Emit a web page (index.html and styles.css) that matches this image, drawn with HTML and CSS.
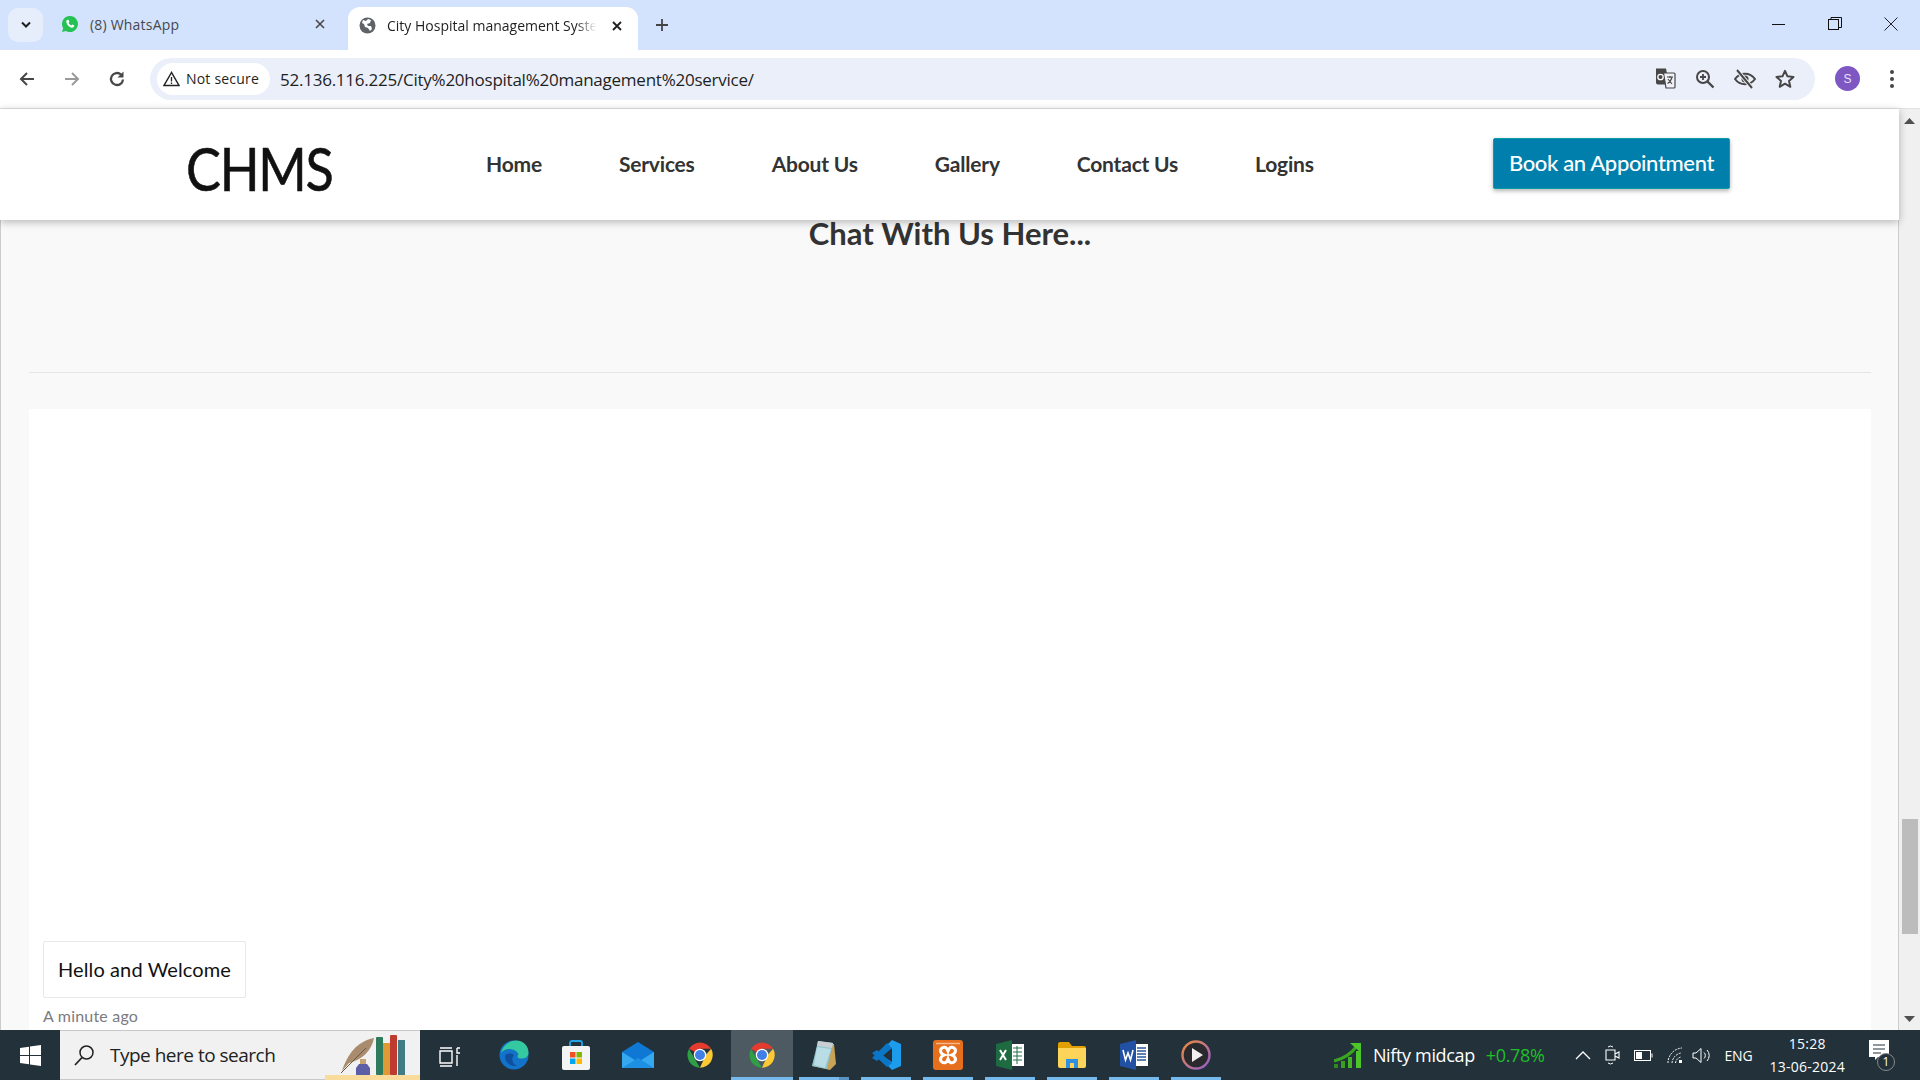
FILE: index.html
```html
<!DOCTYPE html>
<html lang="en">
<head>
<meta charset="utf-8">
<title>City Hospital management System</title>
<link rel="stylesheet" href="styles.css">
</head>
<body>
<svg class="defs" width="0" height="0">
  <symbol id="chrome" viewBox="0 0 48 48">
    <path d="M24 24L6.500 14A20.500 20.500 0 0 1 41.800 14H24z" fill="#e33b2e"/>
    <path d="M41.800 14A20.500 20.500 0 0 1 24 44.500L33 24z" fill="#fcc934"/>
    <path d="M24 44.500A20.500 20.500 0 0 1 6.500 14L15 29z" fill="#2f9e44"/>
    <circle cx="24" cy="24" r="10" fill="#fff"/>
    <circle cx="24" cy="24" r="8" fill="#3f7fe6"/>
  </symbol>
</svg>

<div class="tabstrip">
  <div class="tab-search"><svg width="12" height="8" viewBox="0 0 12 8"><path d="M2 1.500l4 4 4-4" fill="none" stroke="#1f1f1f" stroke-width="2"/></svg></div>
  <div class="tab tab-idle">
    <svg class="favicon" width="18" height="18" viewBox="0 0 18 18"><path d="M9 1a8 8 0 0 0-6.800 12.200L1 17l3.900-1.100A8 8 0 1 0 9 1z" fill="#25c153"/><path d="M6.400 4.800c-.9.500-1.400 1.800-.8 3.300 .7 1.900 2.400 3.700 4.300 4.400 1.500.5 2.700 0 3.200-.9l.2-1.100-2-1-.9 1c-1.200-.4-2.200-1.400-2.800-2.700l.8-.9-.9-2.100z" fill="#fff"/></svg>
    <span class="tab-title">(8) WhatsApp</span>
    <svg class="tab-close" width="10" height="10" viewBox="0 0 10 10"><path d="M1 1l8 8M9 1l-8 8" stroke="#474747" stroke-width="1.600"/></svg>
  </div>
  <div class="tab tab-active">
    <svg class="favicon" width="17" height="17" viewBox="0 0 17 17"><circle cx="8.500" cy="8.500" r="8" fill="#5f6368"/><path d="M4 3l3 1 2-2 3 1-1 3-3 1 1 2 3 0 1 3-2 2-2-3-3-1-1-3-2-1z" fill="#fff"/></svg>
    <span class="tab-title tab-title-fade">City Hospital management System</span>
    <svg class="tab-close" width="10" height="10" viewBox="0 0 10 10"><path d="M1 1l8 8M9 1l-8 8" stroke="#1f1f1f" stroke-width="1.800"/></svg>
  </div>
  <svg class="new-tab" width="14" height="14" viewBox="0 0 14 14"><path d="M7 1v12M1 7h12" stroke="#444" stroke-width="1.800"/></svg>
  <div class="window-controls">
    <svg width="14" height="14" viewBox="0 0 14 14"><path d="M0 7.500h13" stroke="#111" stroke-width="1"/></svg>
    <svg width="14" height="14" viewBox="0 0 14 14"><rect x=".5" y="2.500" width="10" height="10" fill="none" stroke="#111"/><path d="M3 2.500V.5h10.500v10h-3" fill="none" stroke="#111"/></svg>
    <svg width="14" height="14" viewBox="0 0 14 14"><path d="M.5.5l13 13M13.500.5l-13 13" stroke="#222" stroke-width="1"/></svg>
  </div>
</div>

<div class="toolbar">
  <svg class="nav-btn" width="18" height="18" viewBox="0 0 18 18"><path d="M16 9H3M9 3L3 9l6 6" fill="none" stroke="#474747" stroke-width="2"/></svg>
  <svg class="nav-btn" width="18" height="18" viewBox="0 0 18 18"><path d="M2 9h13M9 3l6 6-6 6" fill="none" stroke="#9a9a9a" stroke-width="2"/></svg>
  <svg class="nav-btn" width="18" height="18" viewBox="0 0 18 18"><path d="M15 9.500A6 6 0 1 1 13 4.500" fill="none" stroke="#474747" stroke-width="2.300"/><path d="M15.500 1.500v6h-6z" fill="#474747"/></svg>
  <div class="omnibox">
    <div class="chip">
      <svg width="17" height="16" viewBox="0 0 17 16"><path d="M8.500 1.500L1 14.500h15z" fill="none" stroke="#222" stroke-width="1.500"/><path d="M8.500 6v4.500M8.500 11.500v1.500" stroke="#222" stroke-width="1.300"/></svg>
      <span>Not secure</span>
    </div>
    <span class="url">52.136.116.225/City%20hospital%20management%20service/</span>
    <div class="omni-icons">
      <svg width="21" height="21" viewBox="0 0 21 21"><path d="M1 .5h10l3 16H3a2 2 0 0 1-2-2z" fill="#474747"/><path d="M8.500 5h10.500a1 1 0 0 1 1 1v13a1 1 0 0 1-1 1H11z" fill="#f0f1f8" stroke="#474747" stroke-width="1.200"/><circle cx="5.500" cy="9" r="2.700" fill="none" stroke="#fff" stroke-width="1.300"/><path d="M12 9h6M15 8v2M17 9.500c-1 3-2.500 5-4.500 6M13 11l4 5" stroke="#474747" stroke-width="1.100" fill="none"/></svg>
      <svg width="20" height="20" viewBox="0 0 20 20"><circle cx="8" cy="8" r="6" fill="none" stroke="#474747" stroke-width="2"/><path d="M12.500 12.500L18.500 18.500" stroke="#474747" stroke-width="2.400"/><path d="M5 8h6M8 5v6" stroke="#474747" stroke-width="1.800"/></svg>
      <svg width="22" height="20" viewBox="0 0 22 20"><path d="M1 10c5-7 15-7 20 0-5 7-15 7-20 0z" fill="none" stroke="#474747" stroke-width="2"/><circle cx="11" cy="10" r="3.500" fill="#474747"/><path d="M3 1l15 18" stroke="#f0f1f8" stroke-width="4"/><path d="M3 1l15 18" stroke="#474747" stroke-width="2"/></svg>
      <svg width="20" height="19" viewBox="0 0 20 19"><path d="M10 1.800l2.500 5.500 6 .6-4.500 4 1.300 5.900L10 14.700l-5.300 3.100L6 11.900l-4.500-4 6-.6z" fill="none" stroke="#474747" stroke-width="2" stroke-linejoin="round"/></svg>
    </div>
  </div>
  <div class="avatar">S</div>
  <svg class="menu-dots" width="6" height="20" viewBox="0 0 6 20"><circle cx="3" cy="3" r="2" fill="#474747"/><circle cx="3" cy="10" r="2" fill="#474747"/><circle cx="3" cy="17" r="2" fill="#474747"/></svg>
</div>

<div class="viewport">
  <div class="page">
    <header class="site-header">
      <div class="logo">CHMS</div>
      <nav class="site-nav">
        <a>Home</a><a>Services</a><a>About Us</a><a>Gallery</a><a>Contact Us</a><a>Logins</a>
      </nav>
      <button class="book-btn">Book an Appointment</button>
    </header>
    <main class="chat">
      <h2 class="chat-title">Chat With Us Here...</h2>
      <hr class="chat-rule">
      <section class="chat-panel">
        <div class="bubble">Hello and Welcome</div>
        <div class="bubble-time">A minute ago</div>
      </section>
    </main>
  </div>
  <div class="scrollbar">
    <svg width="11" height="6" viewBox="0 0 11 6"><path d="M5.500 0L11 6H0z" fill="#505050"/></svg>
    <div class="scroll-track"><div class="scroll-thumb"></div></div>
    <svg width="11" height="6" viewBox="0 0 11 6"><path d="M5.500 6L11 0H0z" fill="#505050"/></svg>
  </div>
</div>

<footer class="taskbar">
  <div class="start"><svg width="21" height="21" viewBox="0 0 21 21"><path d="M0 3l9-1.300V10H0zM10 1.500L21 0v10H10zM0 11h9v8.300L0 18zM10 11h11v10l-11-1.500z" fill="#fff"/></svg></div>
  <div class="searchbox">
    <svg width="22" height="22" viewBox="0 0 22 22"><circle cx="13.500" cy="8.500" r="6.500" fill="none" stroke="#222" stroke-width="1.500"/><path d="M9 13.500L2 21" stroke="#222" stroke-width="1.800"/></svg>
    <span>Type here to search</span>
    <svg class="books" width="96" height="46" viewBox="0 0 96 46">
      <path d="M18 37C24 20 32 8 50 4 48 16 38 26 25 29z" fill="#a98c6d"/>
      <path d="M17 39L42 14" stroke="#6d5844" stroke-width="1"/>
      <rect x="36" y="25" width="6" height="5" fill="#c9a274"/>
      <path d="M35 30h8l3 4v7H32v-7z" fill="#5d5fa6"/>
      <rect x="52" y="3" width="7" height="38" rx="1" fill="#2e7a5c"/>
      <rect x="59" y="9" width="7" height="32" fill="#e09a35"/>
      <rect x="66" y="1" width="7" height="40" rx="1" fill="#bf3a2f"/>
      <rect x="74" y="6" width="7" height="35" fill="#3f7c85"/>
      <rect x="1" y="41" width="95" height="5" fill="#f9dc9c"/>
    </svg>
  </div>
  <div class="task-icons">
    <div class="task-btn task-view"><svg width="22" height="20" viewBox="0 0 22 20"><path d="M1 1h12M1 4h12v12H1zM1 19h12" fill="none" stroke="#fff" stroke-width="1.400"/><path d="M18 1v5h3M18 8v11M18 1h3" fill="none" stroke="#fff" stroke-width="1.400"/></svg></div>
    <div class="task-btn"><svg width="30" height="30" viewBox="0 0 30 30"><circle cx="15" cy="15" r="14.500" fill="#1273c8"/><path d="M2 13C4 4 12 .5 17 .5c8 0 12.500 6 12.500 12 0 5-4 6-7 6-4 0-5-2-3-4-2-6-13-8-17.500-1.500z" fill="#35c9a1"/><path d="M6 16c0 7 6 11 12 10-5-2-6-8-3-11-3-2-8-2-9 1z" fill="#0e4f9f"/></svg></div>
    <div class="task-btn"><svg width="28" height="30" viewBox="0 0 28 30"><path d="M8 7V3a2 2 0 0 1 2-2h8a2 2 0 0 1 2 2v4" fill="none" stroke="#22a5e8" stroke-width="1.800"/><rect y="6" width="28" height="24" rx="2" fill="#f4f4f4"/><rect x="8" y="12" width="5.500" height="5.500" fill="#f25022"/><rect x="14.500" y="12" width="5.500" height="5.500" fill="#7fba00"/><rect x="8" y="18.500" width="5.500" height="5.500" fill="#00a4ef"/><rect x="14.500" y="18.500" width="5.500" height="5.500" fill="#ffb900"/></svg></div>
    <div class="task-btn"><svg width="32" height="26" viewBox="0 0 32 26"><path d="M16 0L32 10v16H0V10z" fill="#0f78d4"/><path d="M0 10l16 10 16-10v16H0z" fill="#35a8ef"/><path d="M0 26l16-10 16 10z" fill="#1e90e4"/></svg></div>
    <div class="task-btn"><svg width="30" height="30"><use href="#chrome"/></svg></div>
    <div class="task-btn task-active"><svg width="30" height="30"><use href="#chrome"/></svg></div>
    <div class="task-btn task-open task-split"><svg width="28" height="32" viewBox="0 0 28 32"><path d="M9 3l15 2 2 20-6 6-18-4z" fill="#c8a356"/><path d="M8 2l15 2-6 26L2 27z" fill="#8cc4cf"/><path d="M8 2l15 2-1 5L7 7z" fill="#c9ced3"/><path d="M7 8l14 2-6 19L4 26z" fill="#d9edf2" opacity=".6"/></svg></div>
    <div class="task-btn task-open"><svg width="30" height="30" viewBox="0 0 30 30"><path d="M21 0l9 4v22l-9 4L6 15z" fill="#1e9cec"/><path d="M21 8v14L10 15z" fill="#24303a"/><path d="M21 8L6 21 1 18 16 3zM6 10l15 13-5 4L1 13z" fill="#0b76c6"/></svg></div>
    <div class="task-btn task-open"><svg width="30" height="30" viewBox="0 0 30 30"><rect width="30" height="30" rx="3" fill="#e66f1d"/><path d="M3 3.500h24" stroke="#f5b78a" stroke-width="1.500"/><path d="M9 8c3-2 5 0 6 3 1-3 3-5 6-3 3 2 1 6-2 7 3 1 5 5 2 7-3 2-5 0-6-3-1 3-3 5-6 3-3-2-1-6 2-7-3-1-5-5-2-7z" fill="none" stroke="#fff" stroke-width="3"/></svg></div>
    <div class="task-btn task-open"><svg width="28" height="30" viewBox="0 0 28 30"><rect x="13" y="4" width="15" height="22" fill="#fff"/><path d="M17 8h9M17 12h9M17 16h9M17 20h9M21 6v18" stroke="#217346" stroke-width="1"/><path d="M16 0v30L0 26V4z" fill="#1e6b41"/><path d="M4 10l6 10M10 10l-6 10" stroke="#fff" stroke-width="2"/></svg></div>
    <div class="task-btn task-open"><svg width="28" height="26" viewBox="0 0 28 26"><path d="M0 2a2 2 0 0 1 2-2h9l3 4h12a2 2 0 0 1 2 2v3H0z" fill="#dfa000"/><path d="M0 6h28v18a2 2 0 0 1-2 2H2a2 2 0 0 1-2-2z" fill="#fcd45a"/><path d="M8 26v-9h12v9h-4v-5h-4v5z" fill="#2f8fe0"/></svg></div>
    <div class="task-btn task-open"><svg width="28" height="30" viewBox="0 0 28 30"><rect x="13" y="4" width="15" height="22" fill="#fff"/><path d="M17 8h9M17 11h9M17 14h9M17 17h9M17 20h9" stroke="#2b579a" stroke-width="1.300"/><path d="M16 0v30L0 26V4z" fill="#2251a3"/><path d="M3 10l2.500 10L8 13l2.500 7L13 10" fill="none" stroke="#fff" stroke-width="1.600"/></svg></div>
    <div class="task-btn task-open"><svg width="30" height="30" viewBox="0 0 30 30"><defs><linearGradient id="ring" x1="0" y1="0" x2="1" y2="1"><stop offset="0" stop-color="#ee8a3c"/><stop offset="1" stop-color="#8f5fd0"/></linearGradient></defs><circle cx="15" cy="15" r="13.500" fill="#2a2a2e" stroke="url(#ring)" stroke-width="2.400"/><path d="M11 8l11 7-11 7z" fill="#f0f0f0"/></svg></div>
  </div>
  <div class="tray">
    <div class="ticker">
      <svg width="30" height="28" viewBox="0 0 30 28"><rect x="1" y="23" width="4" height="4" fill="#2f8a1c"/><rect x="8" y="20" width="4" height="7" fill="#38a01f"/><rect x="15" y="16" width="4" height="11" fill="#45b425"/><rect x="23" y="10" width="5" height="17" fill="#4dc42a"/><path d="M1 20C10 18 18 13 24 5" fill="none" stroke="#3aa61f" stroke-width="3"/><path d="M17 2h11v10z" fill="#4dc42a"/></svg>
      <span class="ticker-name">Nifty midcap</span>
      <span class="ticker-value">+0.78%</span>
    </div>
    <div class="tray-icons">
      <svg width="16" height="10" viewBox="0 0 16 10"><path d="M1 9l7-7 7 7" fill="none" stroke="#fff" stroke-width="1.300"/></svg>
      <svg width="15" height="20" viewBox="0 0 15 20"><path d="M1 5h9v10H1zM10 9l4-2v6l-4-2" fill="none" stroke="#fff" stroke-width="1.100"/><path d="M3 2a4 4 0 0 1 5 0M3 18a4 4 0 0 0 5 0" fill="none" stroke="#fff" stroke-width="1"/></svg>
      <svg width="19" height="11" viewBox="0 0 19 11"><rect x=".5" y=".5" width="16" height="10" fill="none" stroke="#fff"/><rect x="2" y="2" width="6" height="7" fill="#fff"/><path d="M18 3.500v4" stroke="#fff"/></svg>
      <svg width="17" height="17" viewBox="0 0 17 17"><path d="M1 16A15 15 0 0 1 15 1M5 16A11 11 0 0 1 14 6M8.500 16A7 7 0 0 1 14 10" fill="none" stroke="#fff" stroke-width="1" stroke-dasharray="2 1"/><rect x="12" y="13" width="3" height="3" fill="#fff"/></svg>
      <svg width="19" height="17" viewBox="0 0 19 17"><path d="M1 6h3l5-4.500v14L4 11H1z" fill="none" stroke="#fff"/><path d="M12 5.500a4 4 0 0 1 0 6M15 3a8 8 0 0 1 0 11" fill="none" stroke="#fff"/></svg>
    </div>
    <span class="lang">ENG</span>
    <div class="clock"><span>15:28</span><span>13-06-2024</span></div>
    <div class="notify">
      <svg width="20" height="20" viewBox="0 0 20 20"><path d="M0 0h20v17H9l-3 3v-3H0z" fill="#fff"/><path d="M4 5h12M4 9h12M4 13h8" stroke="#22313a"/></svg>
      <span class="notify-badge">1</span>
    </div>
  </div>
</footer>
</body>
</html>
```
FILE: styles.css
```css
* { box-sizing: border-box; }
html, body { margin: 0; height: 100%; overflow: hidden; }
body { display: flex; flex-direction: column; width: 1920px; height: 1080px; font-family: "Open Sans", sans-serif; background: #fff; }
.defs { position: absolute; }

/* Tab strip */
.tabstrip { height: 50px; flex: none; background: #d3e3fd; display: flex; align-items: flex-end; padding-left: 8px; }
.tab-search { width: 35px; height: 34px; margin-bottom: 8px; border-radius: 10px; background: #e6eefc; display: flex; align-items: center; justify-content: center; }
.tab { height: 42px; display: flex; align-items: center; position: relative; }
.tab-title { font-family: "Open Sans", sans-serif; font-size: 14px; letter-spacing: 0; white-space: nowrap; overflow: hidden; }
.tab-idle { width: 305px; padding-left: 18px; margin-bottom: 5px; }
.tab-idle .favicon { flex: none; margin-right: 11px; }
.tab-idle .tab-title { width: 225px; color: #45484d; letter-spacing: .2px; }
.tab-close { flex: none; }
.tab-active { width: 290px; height: 43px; background: #fff; border-radius: 12px 12px 0 0; padding: 0 0 6px 11px; }
.tab-active .favicon { flex: none; margin-right: 11px; }
.tab-active .tab-title { width: 225px; color: #1f1f1f; -webkit-mask-image: linear-gradient(90deg, #000 84%, transparent 93%); mask-image: linear-gradient(90deg, #000 84%, transparent 93%); }
.new-tab { margin: 0 0 18px 17px; }
.window-controls { margin-left: auto; height: 50px; padding: 17px 22px 0 0; display: flex; align-items: flex-start; gap: 42px; align-self: flex-start; }

/* Toolbar */
.toolbar { height: 59px; flex: none; background: #fff; border-bottom: 1px solid #e2e2e2; border-radius: 12px 12px 0 0; display: flex; align-items: center; padding: 0 0 1px 18px; }
.nav-btn { flex: none; margin-right: 27px; }
.omnibox { width: 1665px; height: 42px; margin-left: -3px; border-radius: 21px; background: #ebeff9; display: flex; align-items: center; padding-left: 7px; }
.chip { width: 113px; height: 32px; border-radius: 16px; background: #fff; display: flex; align-items: center; gap: 6px; padding-left: 6px; font-size: 14px; letter-spacing: .2px; color: #1f1f1f; }
.url { margin-left: 10px; padding-top: 1px; font-size: 17px; letter-spacing: -.24px; color: #1f1f1f; white-space: nowrap; }
.omni-icons { margin-left: auto; display: flex; align-items: center; gap: 19px; padding-right: 20px; }
.avatar { width: 25px; height: 25px; margin-left: 20px; border-radius: 50%; background: #7e57c2; color: #e8e0f8; font: 12px "Liberation Sans", sans-serif; display: flex; align-items: center; justify-content: center; }
.menu-dots { margin-left: 29px; }

/* Page */
.viewport { flex: 1; min-height: 0; display: flex; }
.page { flex: 1; min-width: 0; display: flex; flex-direction: column; background: #f9f9f9; border-left: 1px solid #ccc; border-right: 1px solid #ccc; }
.site-header { height: 111px; flex: none; background: #fff; display: flex; align-items: center; padding: 0 0 2px 186px; box-shadow: 0 2px 8px rgba(0,0,0,.28); position: relative; z-index: 1; margin-left: -1px; margin-right: -1px; }
.logo { width: 300px; font: 400 60px "Lato", sans-serif; letter-spacing: -1.400px; color: #111; line-height: 1; padding-top: 8px; transform: scaleX(.87); transform-origin: left center; -webkit-text-stroke: .6px #111; }
.site-nav { display: flex; gap: 77px; }
.site-nav a { font: 700 21px "Lato", sans-serif; letter-spacing: -.2px; color: #333; }
.book-btn { margin-left: auto; margin-right: 169px; width: 237px; height: 51px; background: #007fad; border: 1px solid #0a9da8; border-radius: 2px; box-shadow: 0 2px 4px rgba(0,0,0,.3); color: #fff; font: 500 22px "Lato", sans-serif; letter-spacing: -.35px; padding: 0 0 2px; }
.chat { flex: 1; min-height: 0; display: flex; flex-direction: column; padding: 0 27px 0 28px; }
.chat-title { margin: 0; height: 69px; font: 700 31px/26px "Lato", sans-serif; color: #333; text-align: center; letter-spacing: 0; }
.chat-rule { flex: none; margin: 83px 0 0; border: 0; border-top: 1px solid #e5e5e5; }
.chat-panel { flex: 1; min-height: 0; margin-top: 36px; background: #fff; display: flex; flex-direction: column; align-items: flex-start; justify-content: flex-end; padding: 0 14px 3px; }
.bubble { width: 203px; height: 57px; border: 1px solid #e8e8e8; border-radius: 2px; display: flex; align-items: center; justify-content: center; padding-bottom: 2px; font: 400 20px "Lato", sans-serif; letter-spacing: .1px; color: #111; }
.bubble-time { margin-top: 7px; font: 400 16px/22px "Lato", sans-serif; letter-spacing: .2px; color: #7b7b80; }

.scrollbar { width: 21px; flex: none; background: #f0f0f0; display: flex; flex-direction: column; align-items: center; padding: 9px 0 8px; }
.scroll-track { flex: 1; width: 100%; display: flex; flex-direction: column; justify-content: flex-end; padding: 0 2px 82px 3px; }
.scroll-thumb { height: 115px; background: #bcbcbc; }

/* Taskbar */
.taskbar { height: 50px; flex: none; background: #22313a; display: flex; align-items: stretch; color: #fff; }
.start { width: 60px; display: flex; align-items: center; justify-content: center; }
.searchbox { width: 360px; background: #f1f1f1; border-top: 1px solid #c8c8c8; border-bottom: 1px solid #c8c8c8; display: flex; align-items: center; padding-left: 13px; color: #222; font: 400 19px "Open Sans", sans-serif; letter-spacing: -.5px; }
.searchbox span { margin-left: 15px; }
.books { margin-left: auto; align-self: flex-end; margin-bottom: -1px; }
.task-icons { display: flex; }
.task-btn { width: 62px; display: flex; align-items: center; justify-content: center; border-bottom: 3px solid transparent; padding-top: 3px; position: relative; }
.task-view { width: 63px; border-bottom: 0; padding-right: 3px; }
.task-active { background: #4d5a62; border-bottom-color: #76b9ed; }
.task-open::after { content: ""; position: absolute; left: 6px; right: 6px; bottom: -3px; height: 3px; background: #76b9ed; }
.task-split::before { content: ""; position: absolute; right: 6px; bottom: -3px; height: 3px; width: 10px; background: #5a93c2; z-index: 1; }
.tray { margin-left: auto; display: flex; align-items: center; padding-right: 29px; }
.ticker { display: flex; align-items: center; }
.ticker-name { margin-left: 10px; font-size: 18px; letter-spacing: -.35px; }
.ticker-value { margin-left: 11px; font-size: 18px; letter-spacing: -.35px; color: #1fbf2a; }
.tray-icons { margin-left: 30px; display: flex; align-items: center; gap: 14px; }
.tray-icons svg:last-child { margin-left: -6px; }
.lang { margin-left: 14px; font-size: 14px; letter-spacing: -.2px; }
.clock { margin-left: 17px; display: flex; flex-direction: column; align-items: center; font-size: 14px; line-height: 23px; letter-spacing: .25px; }
.notify { margin-left: 24px; width: 22px; height: 30px; position: relative; }
.notify-badge { position: absolute; left: 8px; top: 13px; width: 18px; height: 18px; border-radius: 50%; border: 1px solid #888; background: #22313a; font-size: 12px; line-height: 16px; text-align: center; }
```
